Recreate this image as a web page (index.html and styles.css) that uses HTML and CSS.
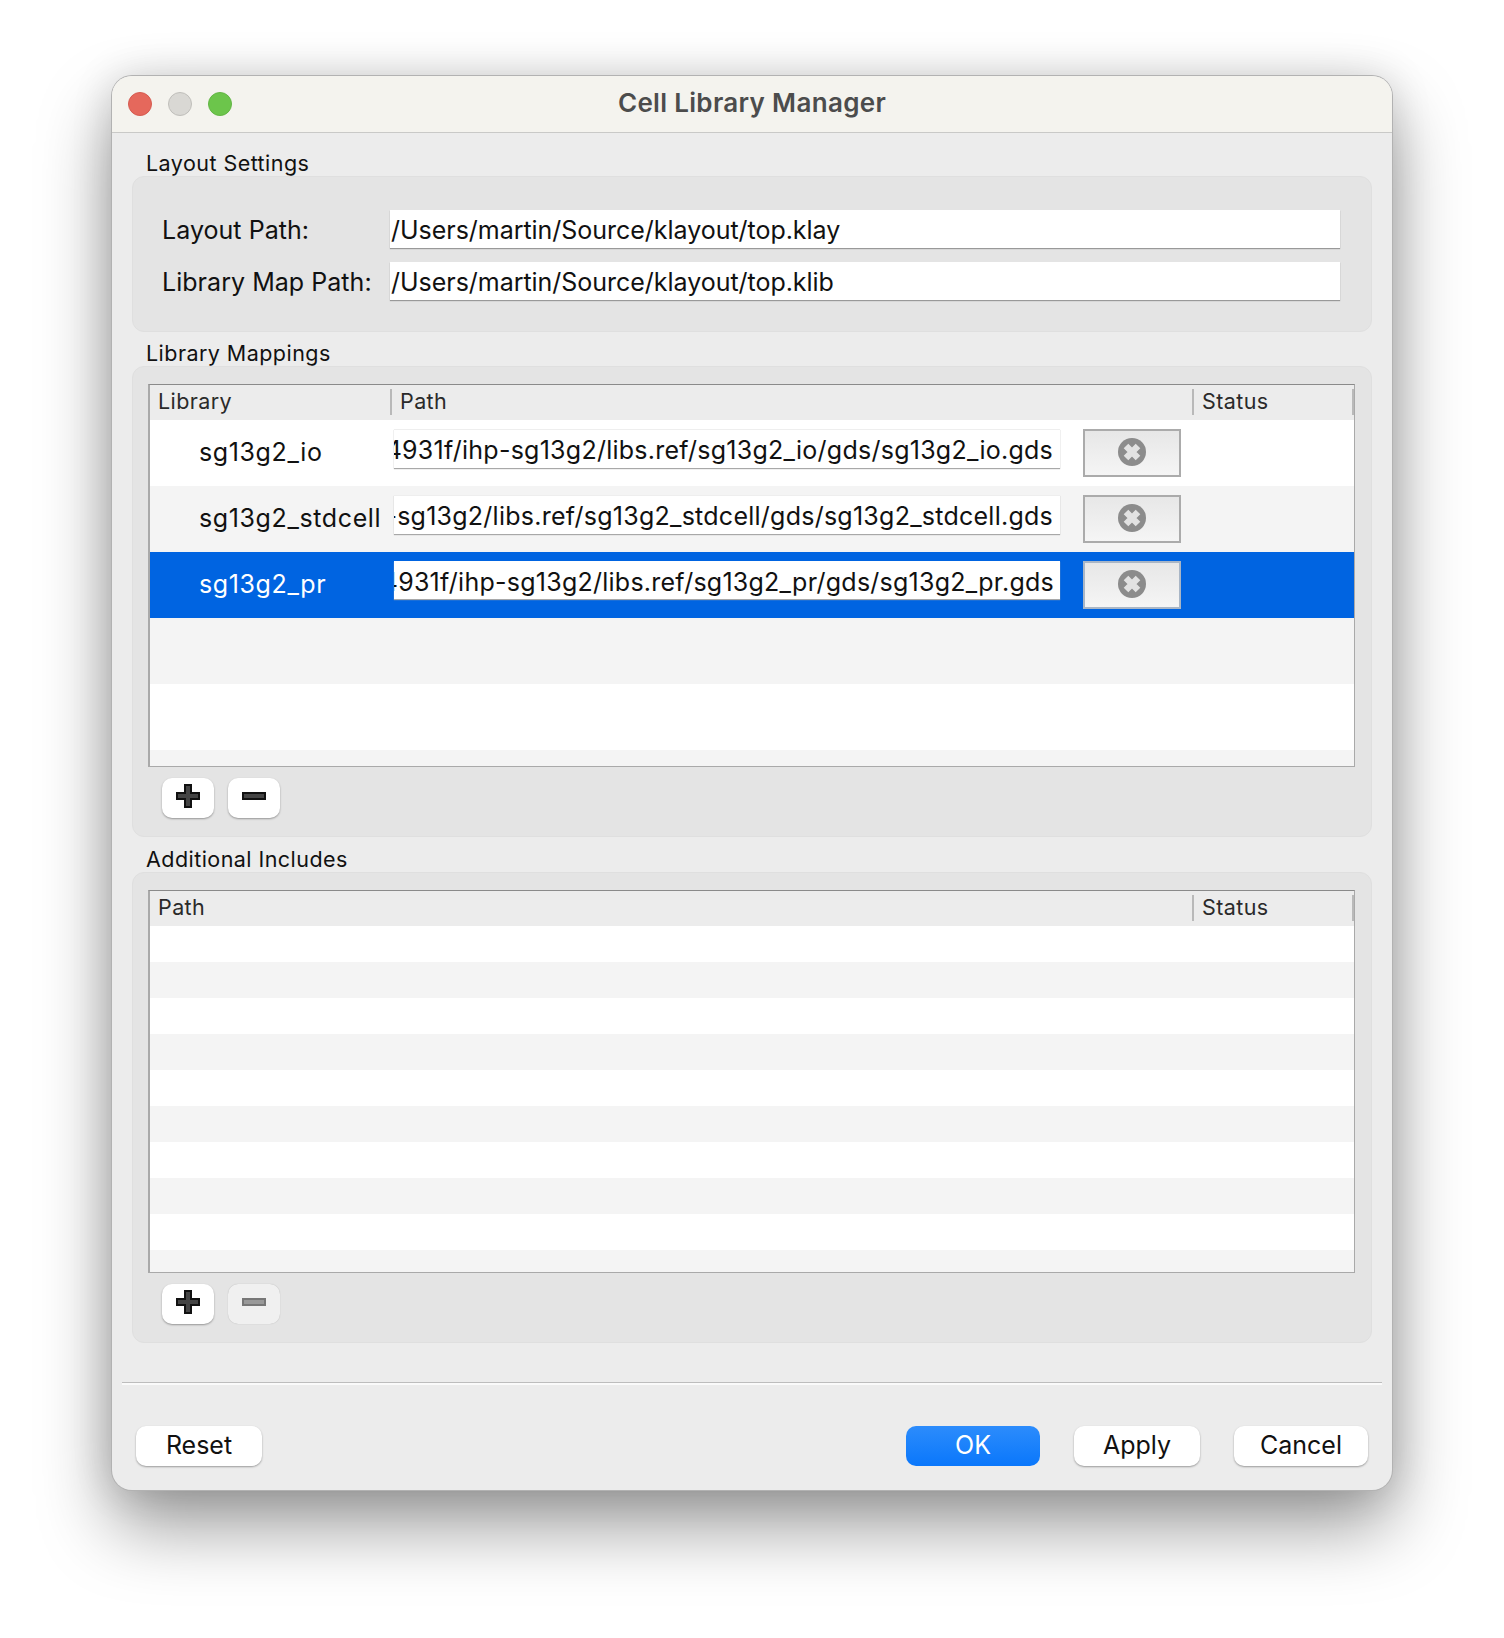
FILE: index.html
```html
<!DOCTYPE html>
<html lang="en">
<head>
<meta charset="utf-8">
<title>Cell Library Manager</title>
<link rel="stylesheet" href="styles.css">
</head>
<body>
<svg class="defs" width="0" height="0" aria-hidden="true">
  <symbol id="i-plus" viewBox="0 0 24 24"><path d="M9 1h6v8h8v6h-8v8H9v-8H1V9h8z" fill="#444" stroke="#111" stroke-width="2"/></symbol>
  <symbol id="i-minus" viewBox="0 0 24 24"><path d="M1 9h22v6H1z" fill="#444" stroke="#111" stroke-width="2"/></symbol>
  <symbol id="i-minus-off" viewBox="0 0 24 24"><path d="M1 9h22v6H1z" fill="#999" stroke="#777" stroke-width="2"/></symbol>
  <symbol id="i-x" viewBox="0 0 28 28"><circle cx="14" cy="14" r="14" fill="#8c8c8c"/><path d="M8 8l12 12M20 8L8 20" stroke="#e2e2e2" stroke-width="6.5" stroke-linecap="butt"/></symbol>
</svg>
<main class="window">
  <header class="titlebar">
    <div class="lights"><span class="light close"></span><span class="light mini"></span><span class="light zoom"></span></div>
    <h1 class="title">Cell Library Manager</h1>
  </header>
  <div class="content">
    <section class="group">
      <h2 class="group-label">Layout Settings</h2>
      <div class="panel panel-form">
        <label class="form-label">Layout Path:</label>
        <div class="line-edit"><span>/Users/martin/Source/klayout/top.klay</span></div>
        <label class="form-label">Library Map Path:</label>
        <div class="line-edit"><span>/Users/martin/Source/klayout/top.klib</span></div>
      </div>
    </section>
    <section class="group">
      <h2 class="group-label">Library Mappings</h2>
      <div class="panel">
        <div class="table table-map">
          <div class="thead">
            <div class="th col-lib">Library</div>
            <div class="th col-path sep">Path</div>
            <div class="th col-status sep end">Status</div>
          </div>
          <div class="row">
            <div class="cell-lib">sg13g2_io</div>
            <div class="cell-path"><div class="path-edit"><span>ihp-sg13g2/4931f/ihp-sg13g2/libs.ref/sg13g2_io/gds/sg13g2_io.gds</span></div></div>
            <div class="cell-btn"><button class="x-btn"><svg class="x-icon"><use href="#i-x"/></svg></button></div>
          </div>
          <div class="row alt">
            <div class="cell-lib">sg13g2_stdcell</div>
            <div class="cell-path"><div class="path-edit"><span>4931f/ihp-sg13g2/libs.ref/sg13g2_stdcell/gds/sg13g2_stdcell.gds</span></div></div>
            <div class="cell-btn"><button class="x-btn"><svg class="x-icon"><use href="#i-x"/></svg></button></div>
          </div>
          <div class="row selected">
            <div class="cell-lib">sg13g2_pr</div>
            <div class="cell-path"><div class="path-edit focus"><span>ihp-sg13g2/4931f/ihp-sg13g2/libs.ref/sg13g2_pr/gds/sg13g2_pr.gds</span></div></div>
            <div class="cell-btn"><button class="x-btn"><svg class="x-icon"><use href="#i-x"/></svg></button></div>
          </div>
          <div class="row alt"></div>
          <div class="row"></div>
          <div class="row alt"></div>
        </div>
        <div class="tools">
          <button class="tool"><svg class="tool-icon"><use href="#i-plus"/></svg></button>
          <button class="tool"><svg class="tool-icon"><use href="#i-minus"/></svg></button>
        </div>
      </div>
    </section>
    <section class="group group-inc">
      <h2 class="group-label">Additional Includes</h2>
      <div class="panel">
        <div class="table table-inc">
          <div class="thead">
            <div class="th col-wide">Path</div>
            <div class="th col-status sep end">Status</div>
          </div>
          <div class="srow"></div><div class="srow alt"></div>
          <div class="srow"></div><div class="srow alt"></div>
          <div class="srow"></div><div class="srow alt"></div>
          <div class="srow"></div><div class="srow alt"></div>
          <div class="srow"></div><div class="srow alt"></div>
        </div>
        <div class="tools">
          <button class="tool"><svg class="tool-icon"><use href="#i-plus"/></svg></button>
          <button class="tool disabled"><svg class="tool-icon"><use href="#i-minus-off"/></svg></button>
        </div>
      </div>
    </section>
  </div>
  <div class="divider"></div>
  <footer class="footer">
    <button class="btn btn-reset">Reset</button>
    <div class="spacer"></div>
    <button class="btn btn-ok">OK</button>
    <button class="btn btn-apply">Apply</button>
    <button class="btn btn-cancel">Cancel</button>
  </footer>
</main>
</body>
</html>
```
FILE: styles.css
```css
* { box-sizing: border-box; }
html, body { margin: 0; height: 100%; }
body {
  background: #fff;
  padding: 76px 112px 0;
  font-family: Inter, "Liberation Sans", sans-serif;
  color: #111;
  overflow: hidden;
}
.defs { position: absolute; }
.window {
  width: 1280px;
  height: 1414px;
  background: #ececec;
  border-radius: 20px;
  box-shadow: 0 0 0 1px #b2b2b2, 0 36px 72px rgba(0,0,0,.4), 0 0 42px rgba(0,0,0,.14);
}
.titlebar {
  height: 57px;
  background: #f4f3ee;
  border-bottom: 1px solid #c9c9c7;
  border-radius: 20px 20px 0 0;
  display: flex;
  align-items: center;
  justify-content: center;
  position: relative;
}
.lights {
  position: absolute;
  left: 16px;
  top: 16px;
  display: flex;
  gap: 16px;
}
.light { width: 24px; height: 24px; border-radius: 50%; }
.close { background: #e5685c; border: 1px solid #d65b50; }
.mini { background: #d9d8d4; border: 1px solid #c0bfbb; }
.zoom { background: #6cc54b; border: 1px solid #62b644; }
.title { margin: 0 0 3px; font-size: 26px; font-weight: 600; color: #4c4c4c; letter-spacing: 0.32px; }
.content { padding: 15px 20px 0; display: flex; flex-direction: column; gap: 6px; }
.group-inc { margin-top: 1px; }
.group-label { margin: 0; padding-left: 14px; height: 28px; line-height: 30px; font-size: 21.5px; font-weight: 400; letter-spacing: .45px; color: #111; }
.panel {
  background: #e4e4e4;
  border: 1px solid #dfdfdf;
  border-radius: 12px;
  padding: 17px 16px 18px 15px;
}
.panel-form {
  height: 156px;
  padding: 33px 31px 0 29px;
  display: grid;
  grid-template-columns: 228px 1fr;
  grid-auto-rows: 38px;
  row-gap: 14px;
  align-items: center;
}
.form-label { font-size: 25px; letter-spacing: .04px; line-height: 38px; padding-top: 2px; color: #111; }
.line-edit {
  height: 38px;
  background: #fff;
  box-shadow: 0 1px 1px #999;
  font-size: 25px;
  letter-spacing: -.03px;
  line-height: 40px;
  padding-left: 1px;
  white-space: nowrap;
  overflow: hidden;
}
.table {
  background: #fff;
  border: 1px solid #a9a9a9;
  border-left-width: 2px;
  border-top-color: #8a8a8a;
  overflow: hidden;
}
.table-map { height: 383px; }
.table-inc { height: 383px; }
.thead { height: 35px; background: #ececec; display: flex; align-items: stretch; }
.th { font-size: 21.5px; letter-spacing: .4px; color: #2a2a2a; padding-left: 8px; line-height: 33px; position: relative; }
.col-lib { width: 240px; }
.col-path { flex: 1; }
.col-wide { flex: 1; }
.col-status { width: 162px; padding-left: 10px; }
.sep::before {
  content: "";
  position: absolute;
  left: 0;
  top: 4px;
  height: 26px;
  width: 2px;
  background: #b9b9b9;
}
.end::after {
  content: "";
  position: absolute;
  right: 0;
  top: 4px;
  height: 26px;
  width: 2px;
  background: #b9b9b9;
}
.col-path.sep { padding-left: 10px; }
.row { height: 66px; display: flex; background: #fff; }
.row.alt { background: #f4f4f4; }
.row.selected { background: #0064e1; color: #fff; }
.cell-lib { width: 244px; padding-left: 49px; font-size: 25px; letter-spacing: .62px; line-height: 64px; white-space: nowrap; }
.cell-path { width: 666px; padding-top: 9px; }
.path-edit {
  width: 666px;
  height: 39px;
  background: #fff;
  box-shadow: 0 1px 1px #a8a8a8;
  border-top: 1px solid #eee;
  display: flex;
  justify-content: flex-end;
  padding-right: 7px;
  font-size: 25px;
  letter-spacing: .25px;
  line-height: 41px;
  color: #111;
  white-space: nowrap;
  overflow: hidden;
}
.path-edit span { flex: none; }
.path-edit.focus { border-top: 0; height: 38px; padding-right: 6px; line-height: 42px; }
.cell-btn { padding: 9px 0 0 23px; }
.x-btn {
  width: 98px;
  height: 48px;
  padding: 0 0 2px;
  border: 2px solid #ababab;
  background: linear-gradient(#e7e7e7, #f5f5f5);
  display: flex;
  align-items: center;
  justify-content: center;
}
.x-icon { width: 28px; height: 28px; }
.selected .x-btn { border-color: #a9b6c6; }
.srow { height: 36px; background: #fff; }
.srow.alt { background: #f4f4f4; }
.tools { display: flex; gap: 14px; margin: 11px 0 0 14px; }
.tool {
  width: 52px;
  height: 40px;
  padding: 6px 0 0;
  border: 0;
  border-radius: 10px;
  background: #fff;
  box-shadow: 0 1px 2px rgba(0,0,0,.35);
  display: flex;
  align-items: flex-start;
  justify-content: center;
}
.tool.disabled { background: #f0f0f0; box-shadow: 0 0 1px rgba(0,0,0,.25); }
.tool-icon { width: 24px; height: 24px; }
.divider {
  margin: 39px 10px 0;
  height: 3px;
  border-top: 1px solid #bdbdbd;
  border-bottom: 2px solid #fafafa;
}
.footer { display: flex; gap: 34px; padding: 41px 24px 0; }
.spacer { flex: 1; }
.btn {
  height: 40px;
  padding: 0 0 2px;
  border: 0;
  border-radius: 10px;
  background: #fff;
  box-shadow: 0 1px 2px rgba(0,0,0,.35);
  font-family: inherit;
  font-size: 25px;
  color: #111;
}
.btn-reset { width: 126px; }
.btn-ok { width: 134px; background: linear-gradient(#2c8cfc, #0a77fb); color: #fff; box-shadow: none; }
.btn-apply { width: 126px; }
.btn-cancel { width: 134px; }
```
